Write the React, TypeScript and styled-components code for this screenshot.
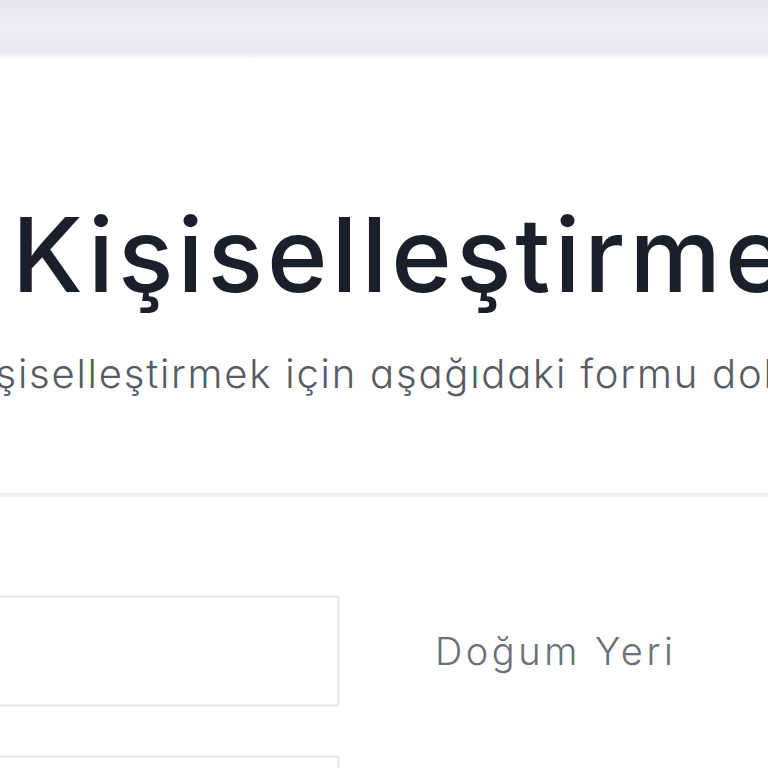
import React from "react";
import styled, { createGlobalStyle } from "styled-components";

const Global = createGlobalStyle`
  html, body {
    margin: 0;
    padding: 0;
    background: #ffffff;
    overflow: hidden;
  }
  body {
    font-family: Inter, "Noto Sans", "Liberation Sans", sans-serif;
    font-feature-settings: "cv11" 1;
  }
`;

const Page = styled.div`
  width: 768px;
  height: 768px;
  overflow: hidden;
  display: flex;
  flex-direction: column;
`;

const TopBar = styled.div`
  height: 58px;
  flex: none;
  background: linear-gradient(
    to bottom,
    #e7e8ee 0%,
    #eeeef4 45%,
    #e9e8ef 88%,
    #f6f5fa 100%
  );
`;

const Header = styled.header`
  display: flex;
  flex-direction: column;
  padding-top: 145px;
  white-space: nowrap;
`;

const Title = styled.h1`
  margin: 0 0 0 12px;
  font-size: 103px;
  line-height: 1;
  font-weight: 500;
  color: #1b1f2a;
  letter-spacing: 4px;
`;

const Subtitle = styled.p`
  margin: 48px 0 0 -44px;
  font-size: 40px;
  line-height: 1;
  font-weight: 300;
  color: #575b63;
  letter-spacing: 1.8px;
`;

const Divider = styled.hr`
  margin: 99px 0 0;
  border: 0;
  height: 4px;
  background: #efefef;
  flex: none;
`;

const Form = styled.form`
  display: flex;
  flex-direction: column;
  gap: 48px;
  padding-top: 98px;
  margin-left: -40px;
`;

const Row = styled.div`
  display: flex;
  align-items: center;
  gap: 95px;
`;

const InputBox = styled.div`
  width: 374px;
  height: 106px;
  flex: none;
  border: 3px solid #ededed;
  border-radius: 4px;
  background: #fff;
`;

const Label = styled.label`
  font-size: 38px;
  font-weight: 300;
  color: #6b6f77;
  letter-spacing: 3.5px;
  white-space: nowrap;
`;

export default function App() {
  return (
    <>
      <Global />
      <Page>
        <TopBar />
        <Header>
          <Title>Kişiselleştirme</Title>
          <Subtitle>Kişiselleştirmek için aşağıdaki formu doldurun.</Subtitle>
        </Header>
        <Divider />
        <Form>
          <Row>
            <InputBox />
            <Label>Doğum Yeri</Label>
          </Row>
          <Row>
            <InputBox />
          </Row>
        </Form>
      </Page>
    </>
  );
}
